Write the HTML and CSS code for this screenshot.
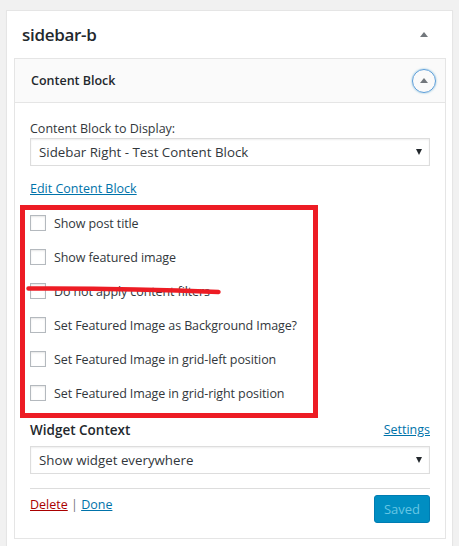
FILE: index.html
```html
<!DOCTYPE html>
<html lang="en">
<head>
<meta charset="utf-8">
<title>sidebar-b</title>
<link rel="stylesheet" href="styles.css">
</head>
<body>
<div class="sidebar">
  <div class="sidebar-head">
    <h2 class="sidebar-title">sidebar-b</h2>
    <span class="tri"></span>
  </div>
  <div class="widget">
    <div class="widget-top">
      <h3 class="widget-title">Content Block</h3>
      <span class="toggle"><span class="tri"></span></span>
    </div>
    <div class="widget-inside">
      <label class="lbl">Content Block to Display:</label>
      <div class="select"><span>Sidebar Right - Test Content Block</span><span class="caret"></span></div>
      <a class="link edit" href="#">Edit Content Block</a>
      <div class="annot">
        <div class="row"><span class="cb"></span><span>Show post title</span></div>
        <div class="row"><span class="cb"></span><span>Show featured image</span></div>
        <div class="row struck"><span class="cb"></span><span>Do not apply content filters</span>
          <svg class="strike" width="200" height="16" viewBox="0 0 200 16"><path d="M2.5 5.5 Q 100 5 192.5 9" fill="none" stroke="#ed1c24" stroke-width="4.5" stroke-linecap="round"/></svg>
        </div>
        <div class="row"><span class="cb"></span><span>Set Featured Image as Background Image?</span></div>
        <div class="row"><span class="cb"></span><span>Set Featured Image in grid-left position</span></div>
        <div class="row"><span class="cb"></span><span>Set Featured Image in grid-right position</span></div>
      </div>
      <div class="ctx-head"><span class="ctx-title">Widget Context</span><a class="link" href="#">Settings</a></div>
      <div class="select select2"><span>Show widget everywhere</span><span class="caret"></span></div>
      <div class="controls">
        <div class="actions"><a class="del" href="#">Delete</a> <span class="pipe">|</span> <a class="link" href="#">Done</a></div>
        <button class="saved" disabled>Saved</button>
      </div>
    </div>
  </div>
</div>
</body>
</html>
```

FILE: styles.css
```css
* { box-sizing: border-box; }
body {
  margin: 0;
  background: #f1f1f1;
  font-family: "Open Sans", "Noto Sans", sans-serif;
  color: #444;
}
.sidebar {
  margin: 10px 6px 0 6px;
  width: 447px;
  background: #fff;
  border: 1px solid #e5e5e5;
  box-shadow: 0 1px 1px rgba(0,0,0,.04);
  padding-bottom: 20px;
}
.sidebar-head {
  height: 47px;
  display: flex;
  align-items: center;
  justify-content: space-between;
  padding: 0 24px 0 15px;
}
.sidebar-title {
  margin: 0;
  font-size: 17px;
  font-weight: 600;
  letter-spacing: -0.3px;
  color: #23282d;
  line-height: 24px;
}
.tri {
  width: 0;
  height: 0;
  border-left: 4px solid transparent;
  border-right: 4px solid transparent;
  border-bottom: 5px solid #72777c;
}
.widget {
  margin: 0 6px 0 7px;
  border: 1px solid #e5e5e5;
  background: #fff;
}
.widget-top {
  height: 44px;
  background: #fafafa;
  border-bottom: 1px solid #e5e5e5;
  display: flex;
  align-items: center;
  justify-content: space-between;
  padding: 0 9px 0 16px;
}
.widget-title {
  margin: 0;
  font-size: 12.5px;
  font-weight: 600;
  color: #23282d;
}
.toggle {
  width: 24px;
  height: 24px;
  border-radius: 50%;
  border: 1.5px solid #5b9dd9;
  box-shadow: 0 0 2px rgba(30,140,190,.6);
  display: flex;
  align-items: center;
  justify-content: center;
}
.toggle .tri { margin-top: -1px; }
.widget-inside {
  padding: 17px 15px 15px;
}
.lbl {
  display: block;
  font-size: 12.5px;
  line-height: 18px;
  color: #32373c;
}
.select {
  height: 28px;
  border: 1px solid #ddd;
  box-shadow: inset 0 1px 2px rgba(0,0,0,.07);
  padding: 0 7px 0 8px;
  display: flex;
  align-items: center;
  justify-content: space-between;
  font-size: 13.3px;
  color: #32373c;
}
.caret {
  width: 0;
  height: 0;
  border-left: 3px solid transparent;
  border-right: 3px solid transparent;
  border-top: 6px solid #23282d;
}
.link {
  color: #0073aa;
  text-decoration: underline;
  font-size: 12.5px;
}
.edit {
  display: block;
  margin-top: 14px;
  line-height: 18px;
}
.annot {
  margin: 7px 0 0 -10px;
  width: 298px;
  border: 5px solid #ed1c24;
  padding: 5px 0 12px 5px;
  display: flex;
  flex-direction: column;
  gap: 18px;
}
.row {
  position: relative;
  height: 16px;
  display: flex;
  align-items: center;
  gap: 8px;
  font-size: 12.5px;
  letter-spacing: -0.1px;
  color: #32373c;
  white-space: nowrap;
}
.cb {
  flex: none;
  width: 16px;
  height: 16px;
  border: 1px solid #b4b9be;
  background: #fff;
  box-shadow: inset 0 1px 2px rgba(0,0,0,.1);
}
.strike {
  position: absolute;
  left: -4px;
  top: 0;
}
.ctx-head {
  margin-top: 3px;
  display: flex;
  justify-content: space-between;
  align-items: center;
  line-height: 18px;
}
.ctx-title {
  font-size: 13.5px;
  font-weight: 600;
  color: #23282d;
}
.select2 { margin-top: 7px; }
.controls {
  margin-top: 14px;
  border-top: 1px solid #ddd;
  padding-top: 6px;
  display: flex;
  justify-content: space-between;
  align-items: flex-start;
}
.actions {
  margin-top: 1px;
  line-height: 18px;
  font-size: 12.5px;
}
.del {
  color: #a00;
  text-decoration: underline;
}
.pipe { color: #72777c; }
.saved {
  height: 28px;
  width: 56px;
  padding: 0;
  border-radius: 3px;
  background: #008ec2;
  border: 1px solid #007cb2;
  color: #66c6e4;
  font-family: inherit;
  font-size: 13px;
}
```
